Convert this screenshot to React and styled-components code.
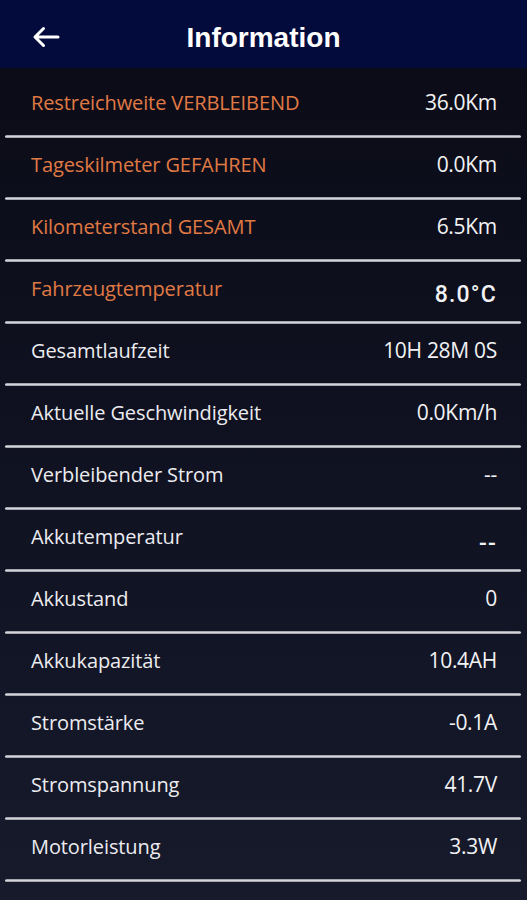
import React from "react";
import styled, { createGlobalStyle } from "styled-components";

const rows = [
  { label: "Restreichweite VERBLEIBEND", value: "36.0Km", accent: true },
  { label: "Tageskilmeter GEFAHREN", value: "0.0Km", accent: true },
  { label: "Kilometerstand GESAMT", value: "6.5Km", accent: true },
  { label: "Fahrzeugtemperatur", value: "8.0°C", accent: true, alt: true },
  { label: "Gesamtlaufzeit", value: "10H 28M 0S" },
  { label: "Aktuelle Geschwindigkeit", value: "0.0Km/h" },
  { label: "Verbleibender Strom", value: "--" },
  { label: "Akkutemperatur", value: "--", alt: true, low: true },
  { label: "Akkustand", value: "0" },
  { label: "Akkukapazität", value: "10.4AH" },
  { label: "Stromstärke", value: "-0.1A" },
  { label: "Stromspannung", value: "41.7V" },
  { label: "Motorleistung", value: "3.3W" },
  { label: "Fehlercode", value: "--" },
];

function App() {
  return (
    <>
      <GlobalStyle />
      <Page>
        <Header>
          <Back aria-label="back">
            <svg width="28" height="22" viewBox="0 0 28 22" fill="none">
              <path
                d="M26 11H3M11.5 2.5L3 11l8.5 8.5"
                stroke="#fff"
                strokeWidth="3"
                strokeLinecap="round"
                strokeLinejoin="round"
              />
            </svg>
          </Back>
          <Title>Information</Title>
        </Header>
        <List>
          {rows.map((r) => (
            <Row key={r.label}>
              <Label $accent={r.accent}>{r.label}</Label>
              <Value $alt={r.alt} $low={r.low}>
                {r.value}
              </Value>
            </Row>
          ))}
        </List>
      </Page>
    </>
  );
}

const GlobalStyle = createGlobalStyle`
  body {
    margin: 0;
    background: #0c0c18;
    font-family: "Open Sans", "Noto Sans", sans-serif;
  }
`;

const Page = styled.div`
  width: 527px;
  height: 900px;
  overflow: hidden;
  background: linear-gradient(180deg, #0b0b16 0%, #0f1120 45%, #161a2b 100%);
`;

const Header = styled.header`
  height: 68px;
  padding-top: 8px;
  box-sizing: border-box;
  background: #030b3c;
  display: flex;
  align-items: center;
  justify-content: center;
  position: relative;
`;

const Back = styled.button`
  position: absolute;
  left: 32px;
  top: 26px;
  padding: 0;
  border: 0;
  background: none;
  display: flex;
`;

const Title = styled.h1`
  margin: 0;
  color: #fff;
  font-family: "Liberation Sans", Arial, sans-serif;
  font-weight: 700;
  font-size: 28px;
`;

const List = styled.div`
  padding-top: 8px;
`;

const Row = styled.div`
  height: 59px;
  display: flex;
  align-items: center;
  justify-content: space-between;
  padding: 0 30px 7px 31px;
  box-sizing: border-box;
  position: relative;
  &::after {
    content: "";
    position: absolute;
    left: 5px;
    right: 6px;
    bottom: -3px;
    height: 3px;
    border-radius: 2px;
    background: linear-gradient(180deg, #8d8f99 0%, #d4d5db 50%, #8d8f99 100%);
  }
  & + & {
    margin-top: 3px;
  }
`;

const Label = styled.span`
  font-size: 20px;
  letter-spacing: -0.1px;
  color: ${(p) => (p.$accent ? "#e07a44" : "#ececf0")};
`;

const Value = styled.span`
  color: #f2f2f4;
  font-size: ${(p) => (p.$alt ? "23px" : "21px")};
  font-family: ${(p) => (p.$alt ? "Roboto, Arial, sans-serif" : "inherit")};
  font-weight: ${(p) => (p.$alt ? 500 : 400)};
  letter-spacing: ${(p) => (p.$alt ? "1.2px" : "-0.3px")};
  margin-top: ${(p) => (p.$low ? "14px" : p.$alt ? "12px" : "0")};
`;

export default App;
